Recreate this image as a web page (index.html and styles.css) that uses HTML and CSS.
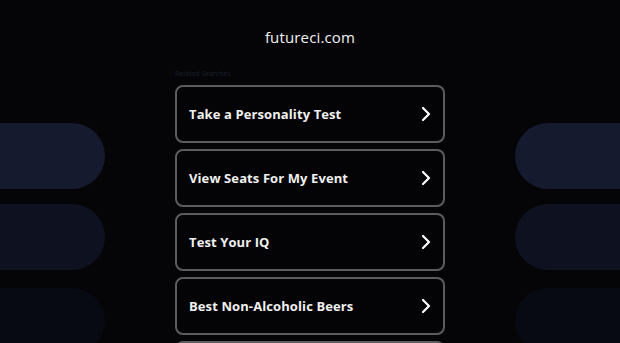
FILE: index.html
```html
<!DOCTYPE html>
<html lang="en">
<head>
    <meta charset="UTF-8">
    <meta name="viewport" content="width=device-width, initial-scale=1.0">
    <title>futureci.com</title>
    <link rel="stylesheet" href="styles.css">
</head>
<body>
    <div class="side side-left">
        <div class="pill pill-1"></div>
        <div class="pill pill-2"></div>
        <div class="pill pill-3"></div>
    </div>
    <div class="side side-right">
        <div class="pill pill-1"></div>
        <div class="pill pill-2"></div>
        <div class="pill pill-3"></div>
    </div>

    <div class="page">
        <h1 class="domain">futureci.com</h1>
        <div class="related">Related Searches</div>
        <div class="links">
            <a class="link" href="#"><span>Take a Personality Test</span><svg class="chev" viewBox="0 0 10 16"><path d="M2 2l6 6-6 6"/></svg></a>
            <a class="link" href="#"><span>View Seats For My Event</span><svg class="chev" viewBox="0 0 10 16"><path d="M2 2l6 6-6 6"/></svg></a>
            <a class="link" href="#"><span>Test Your IQ</span><svg class="chev" viewBox="0 0 10 16"><path d="M2 2l6 6-6 6"/></svg></a>
            <a class="link" href="#"><span>Best Non-Alcoholic Beers</span><svg class="chev" viewBox="0 0 10 16"><path d="M2 2l6 6-6 6"/></svg></a>
            <a class="link" href="#"></a>
        </div>
    </div>
</body>
</html>
```
FILE: styles.css
```css
body {
    margin: 0;
    height: 343px;
    overflow: hidden;
    background: #050508;
    font-family: "Open Sans", sans-serif;
    color: #fff;
}

.side {
    position: absolute;
    top: 123px;
    width: 105px;
    display: flex;
    flex-direction: column;
    gap: 15px;
}

.side-left {
    left: 0;
}

.side-right {
    right: 0;
}

.pill {
    height: 66px;
}

.side-left .pill {
    border-radius: 0 33px 33px 0;
}

.side-right .pill {
    border-radius: 33px 0 0 33px;
}

.pill-1 {
    background: #151a2e;
}

.pill-2 {
    background: #0e111f;
}

.pill-3 {
    background: #080a13;
    margin-top: 3px;
}

.page {
    width: 270px;
    margin: 0 auto;
    padding-top: 26px;
}

.domain {
    margin: 0;
    text-align: center;
    font-size: 15px;
    font-weight: normal;
    letter-spacing: 0.15px;
    line-height: 22px;
    color: #f2f2f2;
}

.related {
    margin-top: 21px;
    font-size: 7px;
    line-height: 10px;
    color: #1d2030;
}

.links {
    margin-top: 6px;
    display: flex;
    flex-direction: column;
    gap: 6px;
}

.link {
    height: 58px;
    box-sizing: border-box;
    border: 2px solid #5c5c60;
    border-radius: 8px;
    background: #040406;
    display: flex;
    align-items: center;
    justify-content: space-between;
    padding: 0 12px;
    text-decoration: none;
    color: #f0f0f0;
    font-size: 13px;
    font-weight: bold;
    letter-spacing: 0.1px;
}

.chev {
    width: 10px;
    height: 16px;
    fill: none;
    stroke: #fff;
    stroke-width: 2.2;
    stroke-linecap: round;
    stroke-linejoin: round;
}
```
